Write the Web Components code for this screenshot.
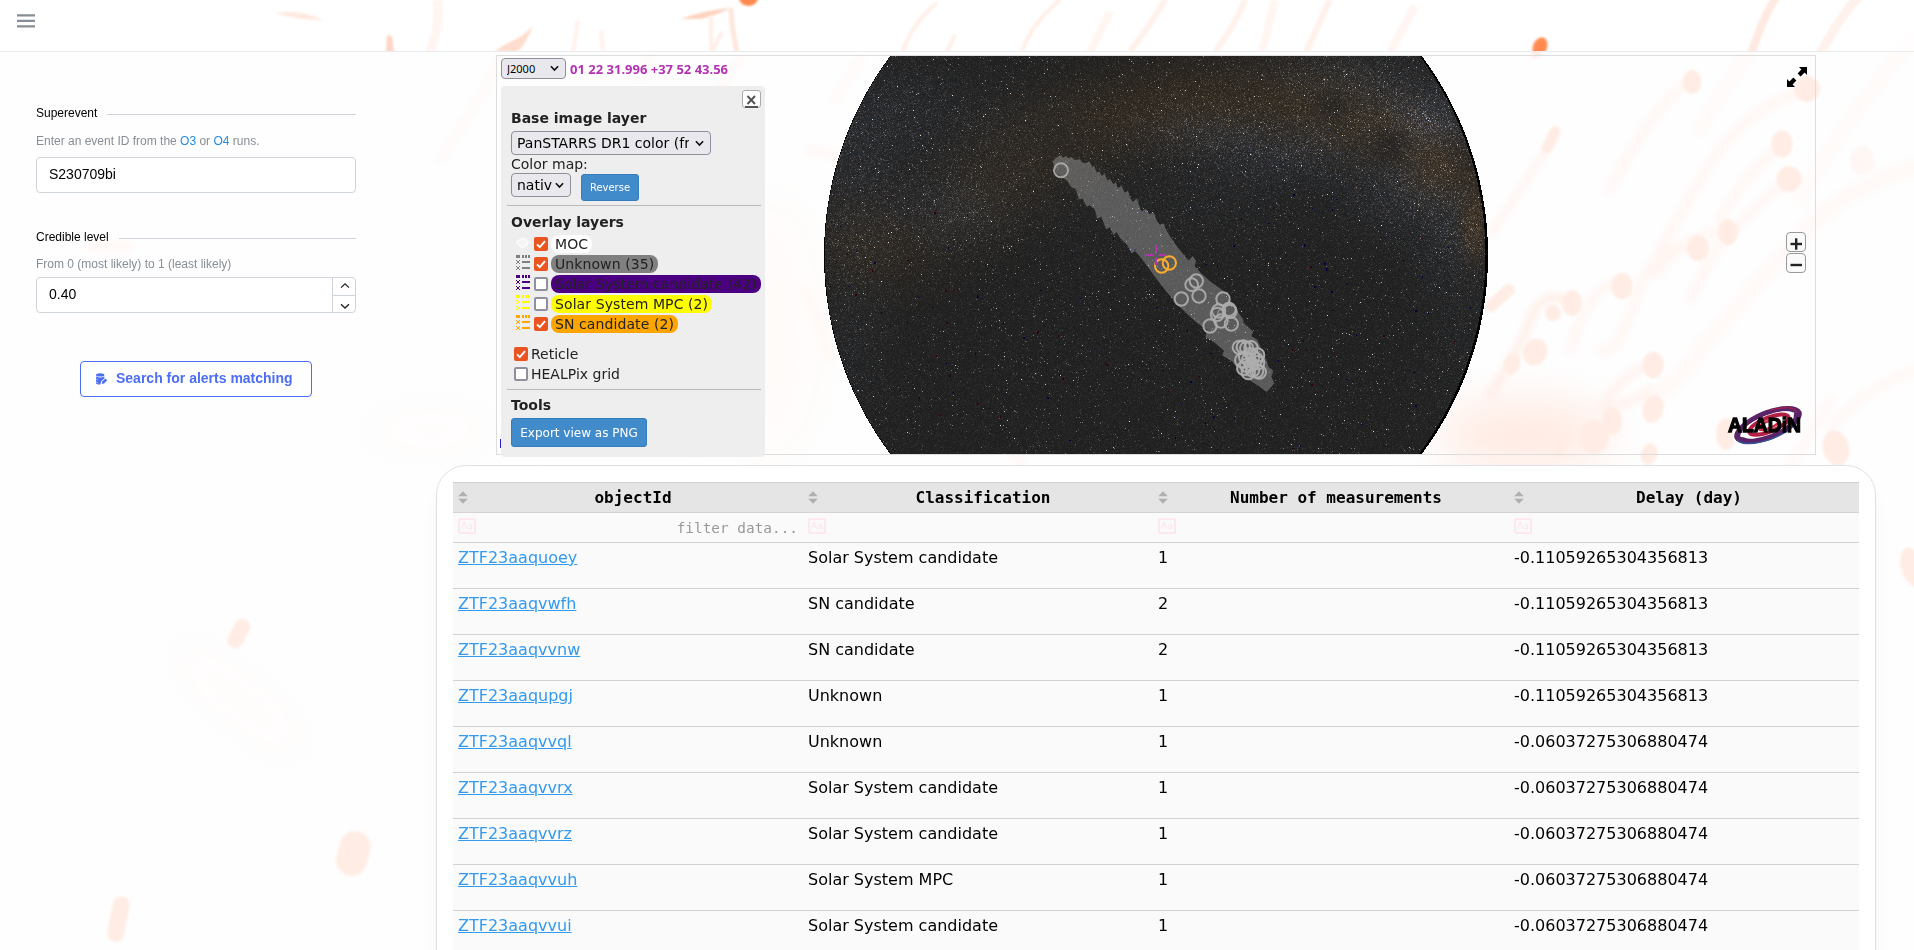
<!DOCTYPE html>
<html lang="en">
<head>
<meta charset="utf-8">
<title>Gravitational wave alerts</title>
<style>
html,body{margin:0;height:100%;overflow:hidden}
body{font-family:"Liberation Sans",Arial,sans-serif;background:#fefefe;color:#000}
</style>
</head>
<body>
<gw-app></gw-app>
<script>
const define=(name,html,init)=>{
  const t=document.createElement('template');t.innerHTML=html;
  customElements.define(name,class extends HTMLElement{
    constructor(){super();this.attachShadow({mode:'open'}).append(t.content.cloneNode(true));}
    connectedCallback(){if(init&&!this.ready){this.ready=true;init(this,this.shadowRoot);}}
  });
};

/* Soft orange comet shapes behind the page */
define('comet-backdrop',`<style>:host{display:block;width:1914px;height:950px}svg{display:block}</style>
<svg width="1914" height="950" viewBox="0 0 1914 950">
<defs><filter id="b1" x="-50%" y="-50%" width="200%" height="200%"><feGaussianBlur stdDeviation="1"/></filter>
<filter id="b4" x="-50%" y="-50%" width="200%" height="200%"><feGaussianBlur stdDeviation="3.5"/></filter>
<filter id="b20" x="-50%" y="-50%" width="200%" height="200%"><feGaussianBlur stdDeviation="22"/></filter>
<clipPath id="hd"><path d="M0 0H1914V51H0z"/></clipPath></defs>
<g filter="url(#b20)" fill="#fff4ef">
<ellipse cx="1525" cy="435" rx="85" ry="35" fill="#ffeae2"/><ellipse cx="770" cy="330" rx="50" ry="130" fill="#fffbf9"/>
<ellipse cx="240" cy="700" rx="90" ry="22" transform="rotate(40 240 700)" fill="#fffcfb"/>
<ellipse cx="430" cy="430" rx="70" ry="20" fill="#fffcfb"/></g>
<g filter="url(#b4)" fill="none" stroke="#fff5f1" stroke-width="8" stroke-linecap="round">
<path d="M1685 85Q1650 110 1610 190M1800 92Q1740 110 1700 180T1660 250M1780 146Q1740 180 1720 220"/>
<path d="M1785 182Q1745 215 1725 240T1690 300M1720 232Q1690 232 1655 275M1695 246Q1655 238 1635 300T1600 350M1617 283Q1590 285 1570 350"/>
<path d="M1568 300Q1540 290 1530 320T1490 395" stroke="#ffeee7"/><path d="M1546 150L1490 235" stroke="#fff1ec" stroke-width="5"/>
<path d="M1914 168Q1840 190 1800 235T1700 350Q1690 370 1650 400" stroke-width="16" stroke="#fff9f7"/>
<path d="M1760 40Q1720 90 1700 130M1914 40Q1850 110 1800 200" stroke-width="12" stroke="#fffaf8"/>
<path d="M1650 364Q1620 375 1600 410M1650 390Q1640 400 1600 410" stroke="#fff2ed"/>
<path d="M1914 370Q1860 390 1830 430M1790 465L1830 400" stroke="#fff7f4"/>
<path d="M500 60Q480 100 440 160M740 60L720 85M860 60L835 100M650 56L640 78" stroke-width="6" stroke="#fff8f5"/>
<path d="M810 150Q840 150 855 175M805 290Q820 320 830 360M1020 460L1010 445" stroke="#fff7f4"/></g>
<g fill="#ffede5" filter="url(#b1)">
<ellipse cx="1692" cy="82" rx="9.5" ry="12"/><circle cx="1807" cy="89" r="13"/><ellipse cx="1782" cy="144" rx="10.5" ry="13.5"/><ellipse cx="1789" cy="179" rx="12.5" ry="13"/>
<ellipse cx="1862" cy="161" rx="12" ry="15" fill="#fff7f4"/><ellipse cx="1728" cy="232" rx="10" ry="13"/><ellipse cx="1698" cy="248" rx="11" ry="13"/>
<ellipse cx="1622" cy="286" rx="10.5" ry="13.5"/><ellipse cx="1572" cy="303" rx="10" ry="13"/><ellipse cx="1553" cy="313" rx="8" ry="8"/>
<ellipse cx="1535" cy="352" rx="12" ry="14" transform="rotate(20 1535 352)"/><ellipse cx="1512" cy="364" rx="8" ry="11" transform="rotate(20 1512 364)"/>
<rect x="1494" y="280" width="12" height="36" rx="6" transform="rotate(48 1500 298)"/><rect x="1546" y="125" width="11" height="29" rx="6" transform="rotate(26 1551 139)"/>
<ellipse cx="1653" cy="365" rx="10.5" ry="13.5"/><ellipse cx="1653" cy="409" rx="10.5" ry="14" transform="rotate(15 1653 409)"/><ellipse cx="1612" cy="421" rx="10" ry="14"/>
<ellipse cx="1594" cy="437" rx="15" ry="17"/><ellipse cx="1726" cy="434" rx="10" ry="16"/><ellipse cx="1836" cy="448" rx="13" ry="18" transform="rotate(-12 1836 448)"/>
<ellipse cx="1649" cy="454" rx="8" ry="11" transform="rotate(20 1649 454)"/><ellipse cx="1559" cy="445" rx="6" ry="12"/><ellipse cx="1538" cy="48" rx="6" ry="11" transform="rotate(25 1538 48)"/>
<ellipse cx="1912" cy="567" rx="11" ry="20" transform="rotate(-15 1912 567)"/>
<rect x="231" y="618" width="16" height="31" rx="8" transform="rotate(28 239 633)"/><rect x="338" y="831" width="31" height="45" rx="15" transform="rotate(15 353 853)"/>
<rect x="110" y="896" width="17" height="46" rx="8" transform="rotate(11 118 919)"/><ellipse cx="110" cy="247" rx="26" ry="7" fill="#fffaf8"/>
</g>
<g clip-path="url(#hd)"><path d="M0 0H1914V51H0z" fill="#fff" fill-opacity=".6"/>
<g filter="url(#b1)"><ellipse cx="748.5" cy="-3" rx="10" ry="9" fill="#ff8a50"/><ellipse cx="1540" cy="47" rx="7" ry="10" transform="rotate(22 1540 47)" fill="#ff8a50"/>
<path d="M681 19Q700 11 731 8Q712 17 700 19Z" fill="#ffd3bf"/><path d="M494 51L510 42Q524 36 533 26Q526 44 517 52Z" fill="#ffdccd"/>
<path d="M387 35L392 36L394 52H386Z" fill="#ffd6c5"/><path d="M276 13Q300 9 323 20Q300 21 276 13Z" fill="#ffe9e0"/></g>
<g filter="url(#b1)" fill="none" stroke="#ffe6dc" stroke-width="4">
<path d="M731 8Q731 25 737 52" stroke-width="5"/><path d="M437 0Q441 20 430 52" stroke="#fff5f1" stroke-width="9"/><path d="M578 20L573 52M601 30L603 52" stroke="#fff2ec"/>
<path d="M711 16L711 50M722 32L712 52" stroke="#ffefe8"/><path d="M937 3Q915 20 902 52M955 35L947 52M1060 0Q1030 25 1022 52" stroke="#ffefe8"/>
<path d="M1777 -4Q1765 12 1751 54" stroke="#ffe9e0" stroke-width="8"/><path d="M1862 -6Q1845 8 1820 54" stroke="#fff1eb" stroke-width="9"/>
<path d="M1165 0Q1150 25 1130 52M1245 0Q1235 25 1215 52M1330 0L1306 52" stroke="#fff1eb" stroke-width="6"/><path d="M1275 0L1262 52M1110 12L1090 52M1415 6L1390 52" stroke="#fff6f2" stroke-width="8"/></g></g>
</svg>`);

define('app-bar',`<style>:host{display:flex;box-sizing:border-box;height:52px;padding:14px 17px;border-bottom:1px solid #e9ecef}svg{display:block}</style>
<svg width="18" height="14"><path d="M0 1.3H18M0 6.8H18M0 12.3H18" stroke="#868e96" stroke-width="2.2"/></svg>`);

define('field-group',`<style>:host{display:block;width:320px;font-size:12px;line-height:18px}
.l{display:flex;align-items:center;gap:10px}.l i{flex:1;height:1px;background:#ced4da;margin-top:2px}
.h{color:#868e96;margin:var(--hint-top,10px) 0 var(--hint-bottom,7px)}</style>
<div class="l"><span><slot name="label"></slot></span><i></i></div><div class="h"><slot name="hint"></slot></div><slot></slot>`);

define('text-box',`<style>:host{display:flex;box-sizing:border-box;height:36px;border:1px solid #ced4da;border-radius:4px;background:#fff;font-size:14px;line-height:33px;padding-left:12px;overflow:hidden}
span{flex:1}.c{display:none;width:22px;border-left:1px solid #ced4da;flex-direction:column}:host([stepper]) .c{display:flex}
.c svg{display:block;flex:1;min-height:0;width:22px}.c svg+svg{border-top:1px solid #ced4da}path{fill:none;stroke:#222;stroke-width:1.3}</style>
<span><slot></slot></span><div class="c"><svg viewBox="0 0 22 16"><path d="M8 9.4L12 5.6L16 9.4"/></svg><svg viewBox="0 0 22 16"><path d="M8 8L12 11.8L16 8"/></svg></div>`);

define('search-button',`<style>:host{display:flex;box-sizing:border-box;width:232px;height:36px;border:1px solid #4c6ef5;border-radius:4px;background:#fff;color:#4c6ef5;font:bold 14px/32px "Liberation Sans",Arial,sans-serif;padding-left:14px;gap:8px}
svg{margin-top:11px}</style>
<svg width="13" height="13" viewBox="0 0 13 13" fill="#4c6ef5"><ellipse cx="5.2" cy="1.9" rx="4.2" ry="1.7"/><path d="M1 3.4Q5 5.5 9.4 3.4V5.2L6.2 8.2 5.3 11.6Q1.2 11.6 1 10.2Z"/><path d="M7.2 8.6L10.4 5.4 12.2 7.2 9 10.4 6.9 10.9Z"/><path d="M.4 5.6L3 7.2M.6 8.6L3.4 10" stroke="#fff" stroke-width=".5"/></svg><span><slot></slot></span>`);

define('event-form',`<style>:host{display:flex;flex-direction:column;width:320px;padding:52px 0 0 36px}a{color:#228be6}.b{margin-top:35px;--hint-top:9px;--hint-bottom:4px}search-button{margin:48px 0 0 44px}</style>
<field-group><span slot="label">Superevent</span><span slot="hint">Enter an event ID from the <a>O3</a> or <a>O4</a> runs.</span><text-box>S230709bi</text-box></field-group>
<field-group class="b"><span slot="label">Credible level</span><span slot="hint">From 0 (most likely) to 1 (least likely)</span><text-box stepper>0.40</text-box></field-group>
<search-button>Search for alerts matching</search-button>`);

define('drop-select',`<style>:host{display:flex;box-sizing:border-box;align-items:center;border:1px solid #8f8f9d;border-radius:4px;background:#e9e9ed;color:#000;overflow:hidden;white-space:nowrap;padding:0 6px 0 5px}
span{flex:1;min-width:0;overflow:hidden;margin-right:var(--cut,0)}svg{flex:none}</style><span><slot></slot></span><svg width="9" height="7"><path d="M.9 1.2L4.5 5L8.1 1.2" fill="none" stroke="#111" stroke-width="1.6"/></svg>`);

define('tick-box',`<style>:host{display:block;width:14px;height:14px}svg{display:block}.on{display:none}:host([checked]) .on{display:block}:host([checked]) .off{display:none}</style>
<svg width="14" height="14"><g class="on"><rect width="14" height="14" rx="2" fill="#e95420"/><path d="M3 7.4L5.8 10.1L11 4.2" fill="none" stroke="#fff" stroke-width="2"/></g>
<rect class="off" x="1" y="1" width="12" height="12" rx="1.2" fill="#fff" stroke="#8f8f9d" stroke-width="2"/></svg>`);

define('layer-row',`<style>:host{display:flex;height:20px;align-items:center;padding-left:5px}svg{display:block;margin-right:4px;margin-top:-3px}.m{display:none}:host([moc]) .m{display:block}:host([moc]) .t{display:none}
.p{margin-left:3px;height:18px;line-height:19px;border-radius:8px;padding:0 4px;background:var(--c);white-space:nowrap;letter-spacing:.09px}</style>
<svg class="t" width="14" height="16" viewBox="0 0 14 16" shape-rendering="crispEdges"><g fill="var(--c)"><path d="M0 0H4V3H0zM6 0H8V3H6zM9 0H11V3H9zM12 0H14V3H12zM6 6H14V8H6zM6 12H14V14H6z"/><path d="M0 5H1V6H0zM3 5H4V6H3zM1 6H3V7H1zM0 8H1V9H0zM3 8H4V9H3zM1 7H3V8H1zM0 11H1V12H0zM3 11H4V12H3zM1 12H3V14H1zM0 14H1V15H0zM3 14H4V15H3z"/></g></svg>
<svg class="m" width="14" height="16" viewBox="0 0 15 16"><path d="M0 7L2 5 4 3.5 6 2.5 8 2 10 3 12 4 13 6 15 7 13 9 11 12 8 13 6 14 4 12 1 10Z" fill="#fafafa"/><path d="M3 8L8 4M4 10L10 5M6 11L12 6" stroke="#e8e8e8" stroke-width=".8"/></svg>
<slot name="box"></slot><span class="p"><slot></slot></span>`);

define('layer-panel',`<style>:host{display:block;box-sizing:border-box;width:264px;height:371px;padding:4px 4px 0 6px;background:#eee;border-radius:4px;color:#222;font:14px/16px "DejaVu Sans",Verdana,sans-serif}
.x{margin-left:auto;box-sizing:border-box;width:19px;height:18px;border:1px solid #aaa;border-radius:3px;background:#fff;display:flex;justify-content:center}
.in{padding-left:4px}b{display:block;height:20px;line-height:20px}hr{border:0;height:1px;background:#bbb;margin:0}
drop-select{height:24px}.row{display:flex;gap:10px}.btn{box-sizing:border-box;background:#428bca;border:1px solid #357ebd;border-radius:3px;color:#fff;text-align:center}
.chk{display:flex;align-items:center;height:20px;gap:3px;padding-left:3px}</style>
<div class="x"><svg width="13" height="17"><path d="M2.5 5L10 13M10 5L2.5 13" stroke="#555" stroke-width="2"/><path d="M0 16H13" stroke="#555" stroke-width="2"/></svg></div>
<div class="in"><b style="height:23px">Base image layer</b>
<drop-select style="width:200px;--cut:6px">PanSTARRS DR1 color (fr</drop-select>
<div style="height:18px;line-height:19px">Color map:</div>
<div class="row"><drop-select style="width:60px">nativ</drop-select><span class="btn" style="width:58px;height:27px;margin-top:1px;font-size:10px;line-height:26px">Reverse</span></div></div>
<hr style="margin-top:4px">
<div class="in"><b style="margin-top:6px;height:22px">Overlay layers</b>
<layer-row moc style="--c:#fff"><tick-box slot="box" checked></tick-box>MOC</layer-row>
<layer-row style="--c:gray"><tick-box slot="box" checked></tick-box>Unknown (35)</layer-row>
<layer-row style="--c:indigo"><tick-box slot="box"></tick-box>Solar System candidate (42)</layer-row>
<layer-row style="--c:yellow"><tick-box slot="box"></tick-box>Solar System MPC (2)</layer-row>
<layer-row style="--c:orange"><tick-box slot="box" checked></tick-box>SN candidate (2)</layer-row>
<div class="chk" style="margin-top:10px"><tick-box checked></tick-box>Reticle</div><div class="chk"><tick-box></tick-box>HEALPix grid</div></div>
<hr style="margin-top:5px"><div class="in"><b style="margin-top:5px;height:23px">Tools</b><div class="btn" style="width:136px;height:29px;font-size:12px;line-height:28px">Export view as PNG</div></div>`);

/* All-sky image: star noise with the Milky Way band, clipped to a disc */
define('sky-disc',`<style>:host{display:grid;width:1318px;height:398px}canvas,svg{grid-area:1/1;display:block}</style><canvas width="1318" height="398"></canvas>
<svg width="1318" height="398" viewBox="497 56 1318 398"><g transform="translate(1030 140) scale(.33333)">
<path fill="#aaa" fill-opacity=".42" d="M68 64L76 56 82 50 92 46 99 53 108 48 114 55 125 51 132 60 150 58 158 68 170 69 178 64 188 82 192 76 200 98 208 94 216 108 224 100 232 122 240 116 250 132 258 127 264 146 274 136 284 158 294 152 302 178 310 186 320 175 328 198 334 214 348 206 358 222 372 218 380 242 390 254 400 250 410 272 424 295 440 318 462 345 476 362 488 348 498 362 494 378 512 398 540 424 580 452 604 486 622 512 640 540 640 548 654 560 670 575 664 588 682 600 700 640 712 668 716 682 730 692 724 710 733 730 710 756 680 734 640 708 606 664 576 646 582 632 552 606 526 590 532 570 500 548 450 502 410 456 370 404 340 362 316 334 304 340 292 316 270 294 260 276 250 285 240 262 228 268 214 230 202 236 194 208 178 196 170 200 158 176 146 178 138 148 124 142 112 122 96 112 78 100Z"/>
<g fill="none" stroke="#aeaeae" stroke-opacity=".92" stroke-width="6">
<circle cx="93" cy="91" r="21"/><circle cx="485" cy="434" r="19"/><circle cx="499" cy="423" r="20"/><circle cx="454" cy="477" r="20"/><circle cx="507" cy="468" r="20"/><circle cx="579" cy="477" r="20"/>
<circle cx="566" cy="513" r="20"/><circle cx="562" cy="523" r="20"/><circle cx="597" cy="508" r="20"/><circle cx="600" cy="514" r="20"/><circle cx="573" cy="543" r="20"/><circle cx="604" cy="552" r="20"/><circle cx="540" cy="558" r="20"/><circle cx="575" cy="520" r="12" stroke-width="3"/>
<g stroke-opacity=".95"><circle cx="628" cy="622" r="20"/><circle cx="640" cy="621" r="20"/><circle cx="663" cy="623" r="20"/><circle cx="650" cy="625" r="20"/><circle cx="683" cy="645" r="20"/><circle cx="636" cy="661" r="21"/><circle cx="646" cy="652" r="19"/><circle cx="656" cy="660" r="20"/><circle cx="668" cy="650" r="20"/><circle cx="678" cy="658" r="20"/><circle cx="683" cy="668" r="20"/><circle cx="665" cy="673" r="20"/><circle cx="650" cy="676" r="20"/><circle cx="641" cy="685" r="20"/><circle cx="655" cy="698" r="20"/><circle cx="680" cy="693" r="20"/><circle cx="688" cy="696" r="20"/><circle cx="668" cy="690" r="20"/><circle cx="663" cy="663" r="10" stroke-width="8"/><circle cx="660" cy="640" r="16"/></g></g>
<g fill="none" stroke="#faad2e" stroke-width="6"><circle cx="395" cy="378" r="20"/><circle cx="418" cy="369" r="20"/></g>
<path d="M378 315V337M378 353V375M347 345H370M386 345H408" stroke="#b232b2" stroke-width="6"/></g></svg>`,(el,r)=>{
  const c=r.querySelector('canvas'),x=c.getContext('2d'),W=1318,H=398,im=x.createImageData(W,H),d=im.data;
  let s=20230709;const R=()=>{s|=0;s=s+0x6D2B79F5|0;let t=Math.imul(s^s>>>15,1|s);t=t+Math.imul(t^t>>>7,61|t)^t;return((t^t>>>14)>>>0)/4294967296;};
  const brown=[[850,240,50,50,.3],[900,250,60,45,.3],[985,190,55,50,.4],[1050,145,60,45,.5],[1130,115,80,42,.5],[1230,95,90,40,.6],[1330,110,60,40,.7],[1395,135,45,32,.7],[1440,170,36,34,.9],[1475,225,16,38,1.1]];
  const blue=[[850,170,50,80,.35],[950,210,55,35,.45],[1010,130,80,50,.15],[1200,130,60,25,.4],[1290,150,80,32,.5],[1370,90,60,35,.35],[1430,120,40,30,.9],[1400,190,50,40,.5],[1450,230,35,50,.4],[1200,200,130,50,.15],[900,110,70,50,.3],[1470,340,45,120,.16],[850,330,40,90,.2],[1330,75,90,25,.25]];
  const dark=[[1390,145,20,20,.7],[1332,104,20,16,.6],[1050,135,35,22,.4],[1100,170,60,20,.2]];
  const f=(a,X,Y)=>a.reduce((v,[p,q,w,h,k])=>{const u=(X-p)/w,z=(Y-q)/h;return v+k*Math.exp(-u*u-z*z);},0);
  for(let j=0;j<H;j++)for(let i=0;i<W;i++){
    const X=i+497,Y=j+56,D=Math.hypot(X+.5-1156,Y+.5-255),n=(j*W+i)*4;
    if(D>332)continue;
    d[n+3]=255;
    if((X>1156&&Math.hypot(X+.5-1154,Y+.5-254.5)>331.5)||D>331.4){continue;}
    const k=1-Math.min(.75,f(dark,X,Y)),br=f(brown,X,Y)*k,bl=f(blue,X,Y)*k,lum=br*.35+bl;
    let v=-Math.log(1-R())*(5+lum*14),q=R();
    if(q<.011)v+=30+R()*70;if(q<.0012)v+=95;
    let a=30+v+br*17+bl*6,g=30+v*.99+br*7+bl*10,b=30+v*(1+.1*bl-.1*Math.min(br,1))+bl*15-br*4;
    const jt=(R()-.5)*v*.4;a+=jt;b-=jt;
    d[n]=a;d[n+1]=g;d[n+2]=b;
  }
  x.putImageData(im,0,0);
  for(let i=0;i<130;i++){const X=840+R()*640,Y=190+R()*260;if(Math.hypot(X-1156,Y-255)<325){x.fillStyle=R()<.5?'#00003c':'#300006';x.fillRect(X-497|0,Y-56|0,1+(R()<.4),1+(R()<.5));}}
  x.fillStyle='#000048';[[1324,262],[1326,268],[1304,244],[977,295],[1213,416]].forEach(p=>x.fillRect(p[0]-497,p[1]-56,1.5,3));
});

define('map-button',`<style>:host{display:block;box-sizing:border-box;width:20px;height:20px;border:1px solid #999;border-radius:4px;background:#fafafa}svg{display:block}.v{display:none}:host([plus]) .v{display:block}</style>
<svg width="18" height="18"><path d="M3.5 11H15" stroke="#222" stroke-width="2.4"/><path class="v" d="M9.2 5.3V16.7" stroke="#222" stroke-width="2.4"/></svg>`);

define('sky-viewer',`<style>:host{display:block;position:relative;box-sizing:border-box;width:1320px;height:400px;border:1px solid #ddd}
.o{position:absolute}.top{left:4px;top:2px;display:flex;gap:4px;align-items:center;font-family:"Noto Sans",sans-serif}
.top drop-select{width:65px;height:21px;font-size:11px}.xy{font-weight:bold;font-size:13px;color:#b232b2;white-space:nowrap;line-height:20px}
.z{right:9px;top:176px;display:grid;gap:1px}</style>
<sky-disc></sky-disc>
<div class="o top"><drop-select>J2000</drop-select><span class="xy">01 22 31.996 +37 52 43.56</span></div>
<i class="o" style="left:3px;top:383px;width:2px;height:9px;background:#2a1fd0"></i>
<layer-panel class="o" style="left:4px;top:30px"></layer-panel>
<svg class="o" style="left:1290px;top:11px" width="20" height="20"><path d="M12 0H20V8L17.6 5.6 13.6 9.4 10.6 6.4 14.4 2.4ZM8 20H0V12L2.4 14.4 6.4 10.6 9.4 13.6 5.6 17.6Z"/></svg>
<div class="o z"><map-button plus></map-button><map-button></map-button></div>
<svg class="o" style="left:1228px;top:347px" width="80" height="44" viewBox="1725 403 80 44"><g fill="none" transform="rotate(-22 1768 425)"><ellipse cx="1768" cy="425" rx="34" ry="12.5" stroke="#fff" stroke-width="7"/><path fill="#5b2468" fill-rule="evenodd" d="M1732 425A36 14.5 0 0 1 1804 425A36 14.5 0 0 1 1732 425ZM1738 425.5A31 10.5 0 0 0 1797 423.5A30 10.5 0 0 0 1738 425.5Z"/><path d="M1734 427A34 13 0 0 0 1790 436" stroke="#32539b" stroke-width="1.5"/><path d="M1775 412A33 12 0 0 1 1799 424" stroke="#b51f45" stroke-width="1"/><ellipse cx="1768" cy="425" rx="26" ry="8" stroke="#fff" stroke-width="3"/><ellipse cx="1769" cy="425" rx="21" ry="7" stroke="#b51f45" stroke-width="4"/><ellipse cx="1769" cy="425" rx="11" ry="3.6" stroke="#d22a45" stroke-width="2.5" fill="#fff"/></g>
<g font-family="Liberation Sans,Arial,sans-serif" font-weight="bold" font-size="21"><text x="1728" y="432" textLength="73" lengthAdjust="spacingAndGlyphs" stroke="#000" stroke-width="1.3">ALADiN</text></g></svg>`);

define('alert-row',`<style>:host{display:grid;grid-template-columns:350px 350px 356px 350px;height:46px;box-sizing:border-box;border-bottom:1px solid #d3d3d3;background:#fafafa;font:16px/30px "DejaVu Sans",sans-serif}
span{padding-left:5px;white-space:nowrap}a{color:#339af0;text-decoration:underline}</style><span><a></a></span><span></span><span></span><span></span>`,(el,r)=>{
  const v=el.getAttribute('values').split('|');r.querySelector('a').textContent=v[0];r.querySelectorAll('span').forEach((n,i)=>{if(i)n.textContent=v[i];});});

define('column-head',`<style>:host{display:flex;align-items:center;height:30px;font:bold 16px/28px "DejaVu Sans Mono",monospace;background:#e5e5e5}svg{margin-left:5px;flex:none}span{flex:1;text-align:center;padding-right:5px}</style>
<svg width="10" height="13" fill="#b0b0b0"><path d="M5 .2L9.8 5.3H.2ZM5 12.8L9.8 7.7H.2Z"/></svg><span><slot></slot></span>`);

define('column-filter',`<style>:host{display:flex;justify-content:space-between;height:29px;font:14.4px/30px "DejaVu Sans Mono",monospace;color:#999;padding:0 5px}
i{font:9.5px/12px "DejaVu Sans",sans-serif;box-sizing:border-box;width:18px;height:16px;margin-top:5px;border:2px solid #fde8ed;border-radius:2px;color:#fde4ea;text-align:center}</style><i>Aa</i><span><slot></slot></span>`);

define('alert-table',`<style>:host{display:block;box-sizing:border-box;width:1440px;height:600px;border:1px solid #dee2e6;border-radius:30px;background:#fff;padding:16px;box-shadow:0 1px 3px rgba(0,0,0,.04),0 20px 25px -5px rgba(0,0,0,.05),0 10px 10px -5px rgba(0,0,0,.04)}
.g{display:grid;grid-template-columns:350px 350px 356px 350px;border-bottom:1px solid #d3d3d3}.h{border-top:1px solid #d3d3d3;height:29px;background:#e5e5e5}.h column-head{height:29px}.f{background:#fafafa}</style>
<div class="g h"><column-head>objectId</column-head><column-head>Classification</column-head><column-head>Number of measurements</column-head><column-head>Delay (day)</column-head></div>
<div class="g f"><column-filter>filter data...</column-filter><column-filter></column-filter><column-filter></column-filter><column-filter></column-filter></div>
<div class="rows"></div>`,(el,r)=>{
  const A='-0.11059265304356813',B='-0.06037275306880474',S='Solar System candidate';
  [['ZTF23aaquoey',S,1,A],['ZTF23aaqvwfh','SN candidate',2,A],['ZTF23aaqvvnw','SN candidate',2,A],['ZTF23aaqupgj','Unknown',1,A],['ZTF23aaqvvql','Unknown',1,B],['ZTF23aaqvvrx',S,1,B],['ZTF23aaqvvrz',S,1,B],['ZTF23aaqvvuh','Solar System MPC',1,B],['ZTF23aaqvvui',S,1,B]]
  .forEach(v=>{const e=document.createElement('alert-row');e.setAttribute('values',v.join('|'));r.querySelector('.rows').append(e);});});

define('gw-app',`<style>:host{display:grid;width:1914px;height:950px;overflow:hidden}comet-backdrop,.page{grid-area:1/1;min-height:0}.page{z-index:1;height:950px;overflow:hidden}
main{display:grid;grid-template-columns:436px 1fr}.r{display:grid;gap:10px;padding-top:3px;justify-items:start;align-content:start}sky-viewer{margin-left:60px}</style>
<comet-backdrop></comet-backdrop><div class="page"><app-bar></app-bar><main><event-form></event-form><section class="r"><sky-viewer></sky-viewer><alert-table></alert-table></section></main></div>`);
</script>
</body>
</html>
